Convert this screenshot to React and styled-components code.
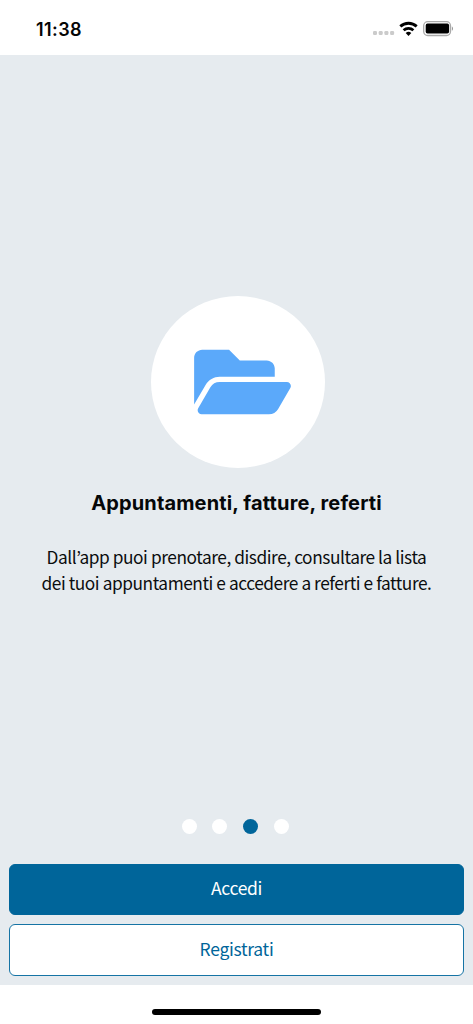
import React from "react";
import styled, { createGlobalStyle } from "styled-components";

const GlobalStyle = createGlobalStyle`
  *, *::before, *::after { box-sizing: border-box; }
  body { margin: 0; background: #fff; }
`;

const sans = `"Noto Sans CJK JP", "Noto Sans", sans-serif`;

const Screen = styled.div`
  display: flex;
  flex-direction: column;
  width: 473px;
  height: 1024px;
  overflow: hidden;
  background: #fff;
  font-family: ${sans};
  color: #0b0d0e;
`;

const StatusBar = styled.header`
  display: flex;
  flex: none;
  align-items: center;
  justify-content: space-between;
  height: 55px;
  padding: 3px 20px 0 36px;
`;

const Time = styled.time`
  padding-top: 1px;
  font: 600 18px/22px Inter, sans-serif;
  letter-spacing: 0.4px;
  color: #050505;
`;

const StatusIcons = styled.svg`
  display: block;
  width: 82px;
  height: 20px;
`;

const Main = styled.main`
  display: flex;
  flex: none;
  flex-direction: column;
  height: 930px;
  padding: 241px 9.3px 9.4px;
  background: #e6ebef;
`;

const Slide = styled.section`
  display: flex;
  flex: 1;
  flex-direction: column;
  align-items: center;
`;

const IconDisc = styled.div`
  display: flex;
  align-items: center;
  justify-content: center;
  width: 174px;
  height: 172px;
  margin-left: 3px;
  padding-left: 8px;
  border-radius: 50%;
  background: #fff;
  color: #5ba9fa;
`;

const Folder = styled.svg`
  display: block;
  width: 97px;
  height: 86px;
`;

const Title = styled.h1`
  margin: 21px 0 0;
  font: 700 20px/28px Inter, sans-serif;
  letter-spacing: 0.14px;
  color: #050708;
  white-space: nowrap;
`;

const Description = styled.p`
  margin: 27px 0 0;
  font-size: 17.3px;
  line-height: 26px;
  letter-spacing: -0.43px;
  text-align: center;
  white-space: nowrap;
`;

const Pager = styled.nav`
  display: flex;
  justify-content: center;
  gap: 15.8px;
  margin: 0 2.4px 30px 0;
`;

const Dot = styled.span`
  width: 15px;
  height: 15px;
  border-radius: 50%;
  background: ${(p) => (p.$active ? "#00659a" : "#fff")};
`;

const Actions = styled.div`
  display: flex;
  flex-direction: column;
  gap: 9px;
`;

const Button = styled.button`
  height: 51.5px;
  padding: 0 0 2px;
  border: 1px solid ${(p) => (p.$primary ? "#00659a" : "#1674a5")};
  border-radius: 6px;
  background: ${(p) => (p.$primary ? "#00659a" : "#fff")};
  color: ${(p) => (p.$primary ? "#fff" : "#00659a")};
  font: 400 17.5px/26px ${sans};
  letter-spacing: -0.3px;
`;

const HomeArea = styled.footer`
  display: flex;
  flex: 1;
  justify-content: center;
  padding-top: 23.5px;
`;

const HomeIndicator = styled.div`
  width: 169px;
  height: 6px;
  border-radius: 3px;
  background: #000;
`;

const slides = [0, 1, 2, 3];

export default function App() {
  return (
    <Screen lang="it">
      <GlobalStyle />
      <StatusBar>
        <Time>11:38</Time>
        <StatusIcons viewBox="0 0 82 20" aria-hidden="true">
          <g fill="#cbcbcb">
            {[2, 7.7, 13.4, 19.1].map((x) => (
              <rect key={x} x={x} y="12" width="4" height="4" rx="1.2" />
            ))}
          </g>
          <g fill="none" stroke="#000" strokeWidth="2.8">
            <path d="M29.3 7.4a12.2 12.2 0 0 1 16.4 0" />
            <path d="M32.6 11.2a7.2 7.2 0 0 1 9.8 0" />
          </g>
          <path d="M34.7 14.1a4.2 4.2 0 0 1 5.6 0L37.5 17z" />
          <rect x="52.7" y="2.7" width="26.8" height="13.8" rx="4" fill="#fff" stroke="#a9a9a9" strokeWidth="1.3" />
          <rect x="54.7" y="4.6" width="23.4" height="10" rx="1.8" />
          <path d="M80.9 7.5v4.2c1.5-.5 1.5-3.7 0-4.2z" fill="#999" />
        </StatusIcons>
      </StatusBar>
      <Main>
        <Slide>
          <IconDisc>
            <Folder viewBox="0 0 576 512" fill="currentColor" aria-hidden="true">
              <path d="M572.694 292.093L500.27 416.248A63.997 63.997 0 0 1 444.989 448H45.025c-18.523 0-30.064-20.093-20.731-36.093l72.424-124.155A64 64 0 0 1 152 256h399.964c18.523 0 30.064 20.093 20.73 36.093zM152 224h328v-48c0-26.51-21.49-48-48-48H272l-64-64H48C21.49 64 0 85.49 0 112v278.046l69.077-118.418C86.214 242.25 117.989 224 152 224z" />
            </Folder>
          </IconDisc>
          <Title>Appuntamenti, fatture, referti</Title>
          <Description>
            Dall’app puoi prenotare, disdire, consultare la lista
            <br />
            dei tuoi appuntamenti e accedere a referti e fatture.
          </Description>
        </Slide>
        <Pager>
          {slides.map((i) => (
            <Dot key={i} $active={i === 2} />
          ))}
        </Pager>
        <Actions>
          <Button $primary>Accedi</Button>
          <Button>Registrati</Button>
        </Actions>
      </Main>
      <HomeArea>
        <HomeIndicator />
      </HomeArea>
    </Screen>
  );
}
